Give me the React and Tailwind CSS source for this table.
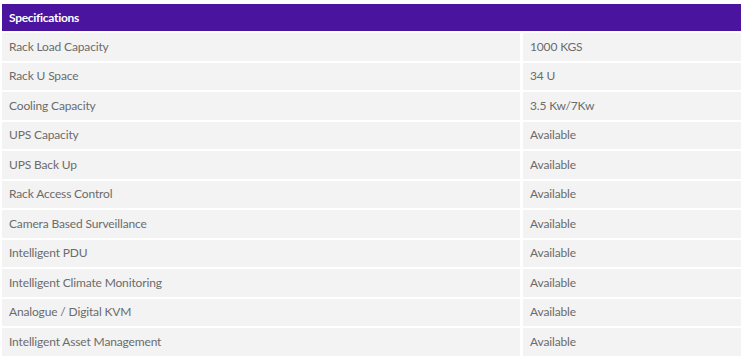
export default function App() {
  const rows = [
    ["Rack Load Capacity", "1000 KGS"],
    ["Rack U Space", "34 U"],
    ["Cooling Capacity", "3.5 Kw/7Kw"],
    ["UPS Capacity", "Available"],
    ["UPS Back Up", "Available"],
    ["Rack Access Control", "Available"],
    ["Camera Based Surveillance", "Available"],
    ["Intelligent PDU", "Available"],
    ["Intelligent Climate Monitoring", "Available"],
    ["Analogue / Digital KVM", "Available"],
    ["Intelligent Asset Management", "Available"],
  ];
  return (
    <div className="w-[751px] h-[362px] bg-white pt-[4px] pl-[2px]" style={{ fontFamily: "Lato, 'Open Sans', sans-serif" }}>
      <div className="w-[739px] flex flex-col gap-[2px]">
        <div className="h-[27px] bg-[#4b149f] flex items-center pl-[7px] text-white font-bold text-[12px] tracking-[-0.3px]">
          Specifications
        </div>
        {rows.map(([k, v]) => (
          <div key={k} className="h-[27.5px] flex gap-[3px] text-[12px] tracking-[-0.15px] text-[#6b6b6b]">
            <div className="w-[518px] bg-[#f3f3f3] flex items-center pl-[7px]">{k}</div>
            <div className="flex-1 bg-[#f3f3f3] flex items-center pl-[7px]">{v}</div>
          </div>
        ))}
      </div>
    </div>
  );
}
